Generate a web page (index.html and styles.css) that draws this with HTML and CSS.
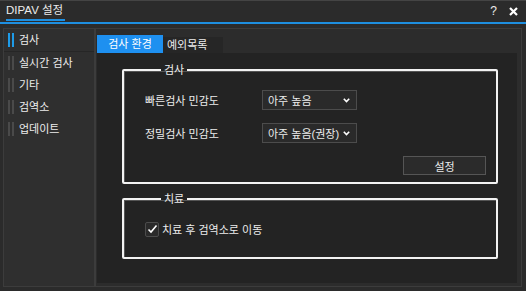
FILE: index.html
```html
<!DOCTYPE html>
<html lang="ko">
<head>
<meta charset="UTF-8">
<meta name="viewport" content="width=device-width, initial-scale=1.0">
<title>DIPAV 설정</title>
<link rel="stylesheet" href="styles.css">
</head>
<body>
<div class="window">
    <div class="titlebar">
        <span class="title">DIPAV 설정</span>
        <div class="title-buttons">
            <span class="help">?</span>
            <svg class="close" width="9" height="9" viewBox="0 0 9 9">
                <path d="M1 1 L8 8 M8 1 L1 8" stroke="#fff" stroke-width="2.2" fill="none"/>
            </svg>
        </div>
    </div>

    <div class="body">
        <ul class="sidebar">
            <li class="menu-item active"><span class="bars"></span>검사</li>
            <li class="menu-item"><span class="bars"></span>실시간 검사</li>
            <li class="menu-item"><span class="bars"></span>기타</li>
            <li class="menu-item"><span class="bars"></span>검역소</li>
            <li class="menu-item"><span class="bars"></span>업데이트</li>
        </ul>

        <div class="main">
            <div class="tabs">
                <div class="tab active">검사 환경</div>
                <div class="tab">예외목록</div>
            </div>
            <div class="content">
                <fieldset class="group group-scan">
                    <legend>검사</legend>
                    <div class="row">
                        <span class="label">빠른검사 민감도</span>
                        <div class="select">
                            <span>아주 높음</span>
                            <svg width="7" height="5" viewBox="0 0 7 5"><path d="M0.8 0.8 L3.5 3.6 L6.2 0.8" stroke="#fff" stroke-width="1.6" fill="none"/></svg>
                        </div>
                    </div>
                    <div class="row">
                        <span class="label">정밀검사 민감도</span>
                        <div class="select">
                            <span>아주 높음(권장)</span>
                            <svg width="7" height="5" viewBox="0 0 7 5"><path d="M0.8 0.8 L3.5 3.6 L6.2 0.8" stroke="#fff" stroke-width="1.6" fill="none"/></svg>
                        </div>
                    </div>
                    <div class="actions">
                        <button class="btn">설정</button>
                    </div>
                </fieldset>

                <fieldset class="group group-cure">
                    <legend>치료</legend>
                    <label class="check">
                        <span class="box">
                            <svg width="11" height="10" viewBox="0 0 11 10"><path d="M1.5 5.5 L4 8 L9.5 1.5" stroke="#fff" stroke-width="1.6" fill="none"/></svg>
                        </span>
                        치료 후 검역소로 이동
                    </label>
                </fieldset>
            </div>
        </div>
    </div>
</div>
</body>
</html>
```

FILE: styles.css
```css
* {
    box-sizing: border-box;
}

body {
    margin: 0;
    background-color: #2b2b2b;
    font-family: "Liberation Sans", "Noto Sans CJK KR", sans-serif;
    font-size: 11px;
    color: #ececec;
}

.window {
    height: 291px;
    display: flex;
    flex-direction: column;
    background-color: #2b2b2b;
    border-top: 1px solid #444;
}

.titlebar {
    height: 23px;
    display: flex;
    align-items: flex-start;
    justify-content: space-between;
    border-bottom: 2px solid #1e8fe0;
}

.title {
    margin-left: 6px;
    padding: 1px 2px 0 0;
    line-height: 17px;
    font-size: 11.5px;
    border-bottom: 2px solid #1e8fe0;
}

.title-buttons {
    display: flex;
    align-items: center;
    gap: 12px;
    margin: 3px 8px 0 0;
    height: 14px;
}

.help {
    font-size: 12px;
    line-height: 14px;
}

.body {
    flex: 1;
    display: flex;
    padding: 4px 4px 4px 3px;
}

.sidebar {
    width: 92px;
    margin: 0;
    padding: 0;
    list-style: none;
    background-color: #2f2f2f;
    border: 1px solid #3c3c3c;
}

.menu-item {
    height: 22px;
    display: flex;
    align-items: center;
    padding-left: 4px;
    line-height: 14px;
}

.menu-item.active {
    height: 23px;
    border-bottom: 1px solid #262626;
}

.bars {
    width: 6px;
    height: 14px;
    margin-right: 5px;
    border-left: 2px solid #4a4a4a;
    border-right: 2px solid #4a4a4a;
}

.menu-item.active .bars {
    border-color: #1e9be8;
}

.main {
    flex: 1;
    display: flex;
    flex-direction: column;
    background-color: #2c2c2c;
    border: 1px solid #3c3c3c;
    padding: 6px 4px 3px 1px;
}

.tabs {
    display: flex;
    align-items: flex-end;
    height: 18px;
}

.tab {
    width: 60px;
    height: 16px;
    line-height: 16px;
    padding-left: 4px;
    background-color: #262626;
}

.tab.active {
    height: 18px;
    line-height: 18px;
    width: 66px;
    padding: 0;
    text-align: center;
    background-color: #1e90f0;
    color: #fff;
}

.content {
    flex: 1;
    background-color: #232323;
    padding: 10px 19px 0 25px;
}

.group {
    margin: 0;
    padding: 0;
    border: 2px solid #f2f2f2;
    border-radius: 2px;
    box-shadow: inset 1px 1px 0 #555;
}

.group legend {
    margin-left: 16px;
    padding: 0 3px;
    line-height: 14px;
}

.group-scan {
    padding: 13px 10px 7px 21px;
}

.row {
    display: flex;
    align-items: center;
    height: 20px;
    margin-bottom: 13px;
}

.label {
    width: 117px;
}

.select {
    width: 95px;
    height: 20px;
    display: flex;
    align-items: center;
    justify-content: space-between;
    padding: 0 6px 0 5px;
    background-color: #2a2a2a;
    border: 1px solid #4c4c4c;
    white-space: nowrap;
}

.actions {
    display: flex;
    justify-content: flex-end;
}

.btn {
    width: 83px;
    height: 19px;
    padding: 0;
    font-family: inherit;
    font-size: 11px;
    color: #ececec;
    background-color: #2b2b2b;
    border: 1px solid #555;
}

.group-cure {
    margin-top: 8px;
    padding: 15px 10px 20px 21px;
}

.check {
    display: flex;
    align-items: center;
    gap: 3px;
    height: 16px;
}

.box {
    width: 14px;
    height: 15px;
    display: flex;
    align-items: center;
    justify-content: center;
    background-color: #2a2a2a;
    border: 1px solid #4c4c4c;
    border-radius: 2px;
}
```
